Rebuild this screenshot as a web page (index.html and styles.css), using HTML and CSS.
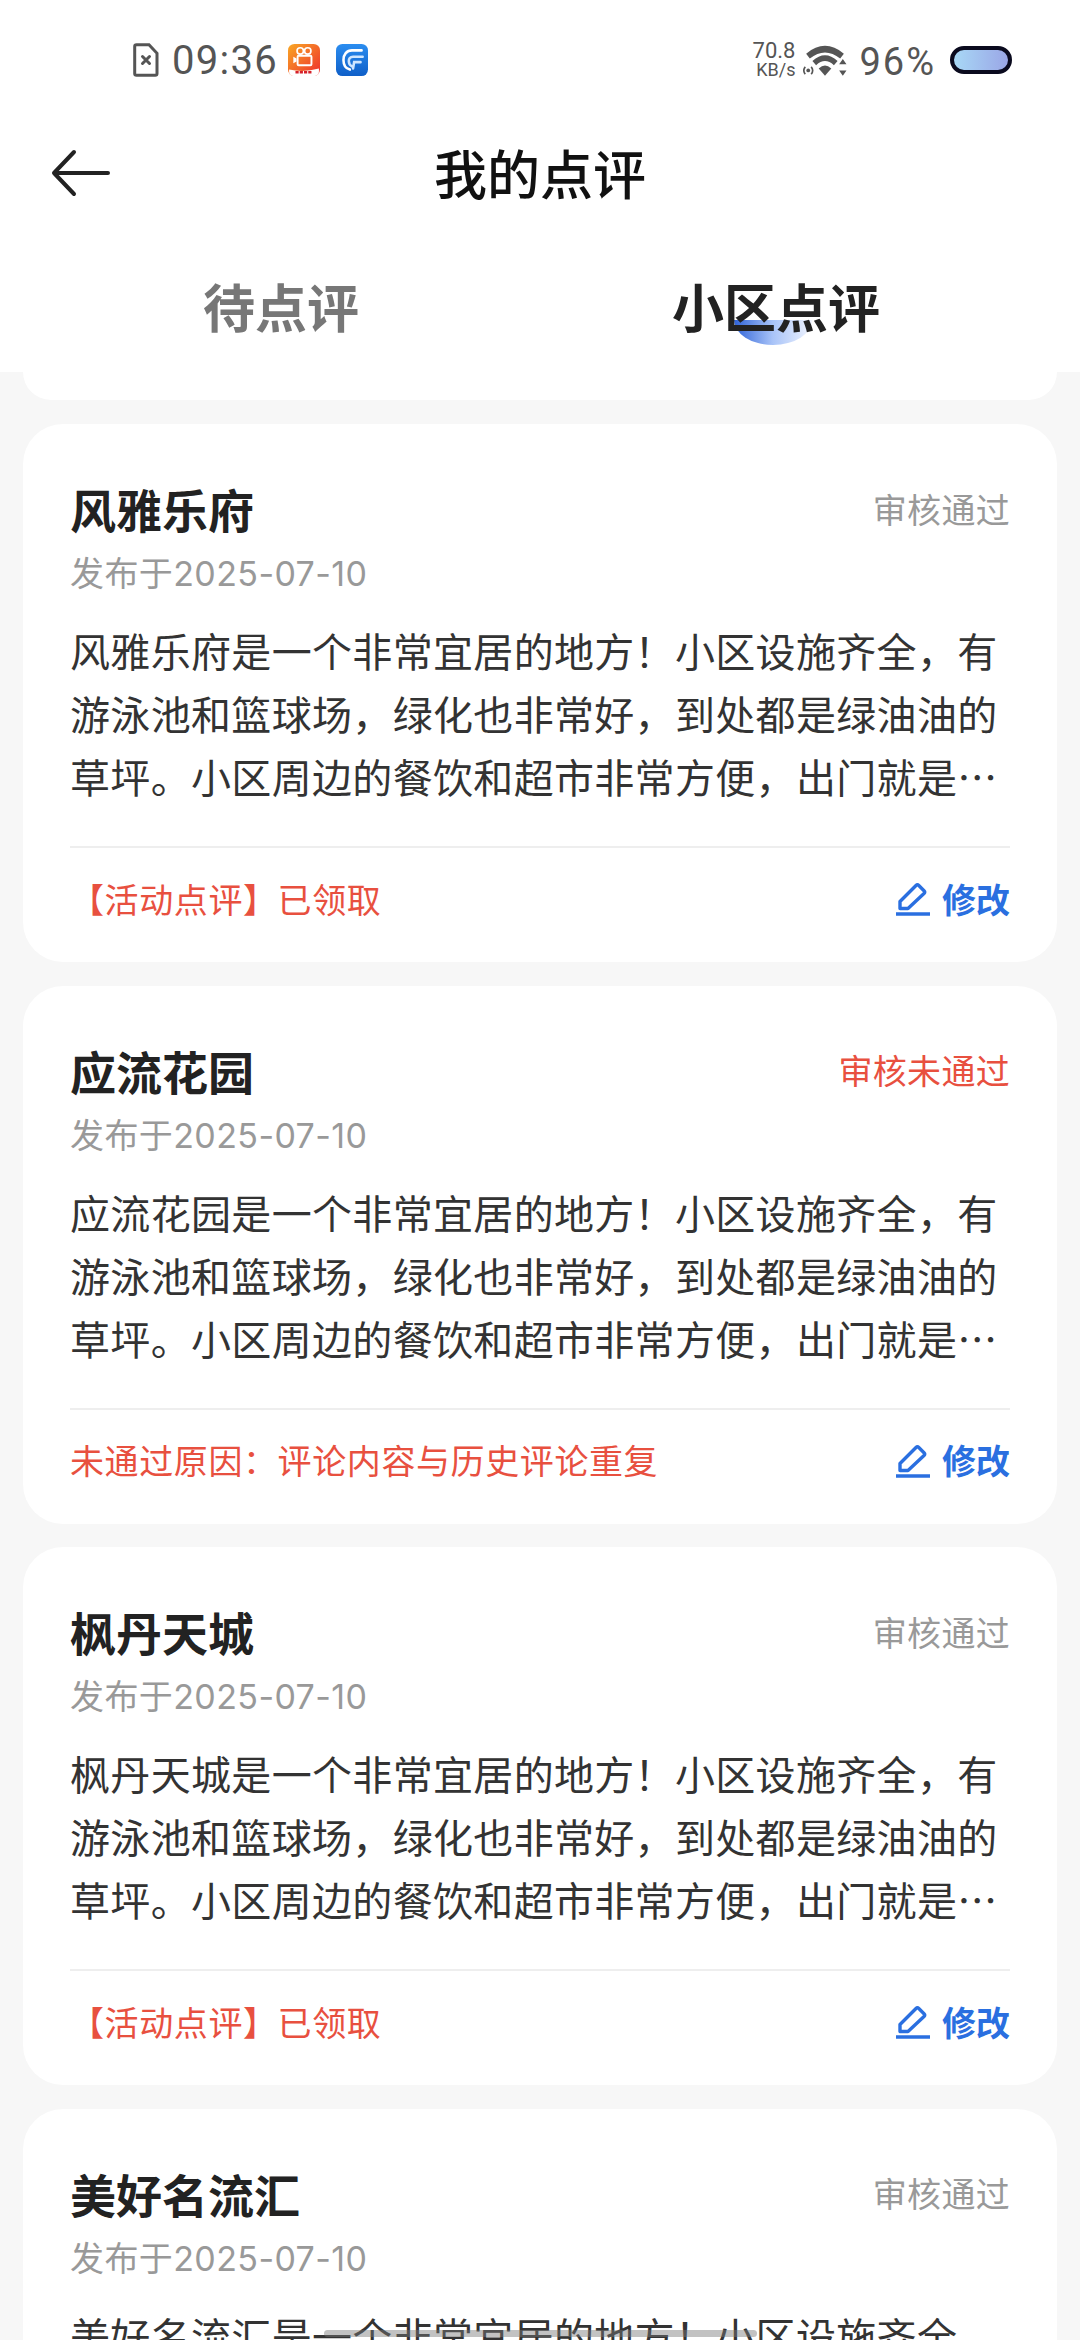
FILE: index.html
```html
<!DOCTYPE html>
<html lang="zh-CN">
<head>
  <meta charset="UTF-8">
  <meta name="viewport" content="width=device-width, initial-scale=1.0">
  <title>我的点评</title>
  <link rel="stylesheet" href="styles.css">
</head>
<body>
  <header class="top">
    <div class="status-bar">
      <div class="status-left">
        <svg class="sim" viewBox="0 0 26 34" width="26" height="34">
          <path d="M3.500 1.800h12.500l8 8.500v20.200a1.800 1.800 0 0 1-1.800 1.800H3.500a1.800 1.800 0 0 1-1.800-1.800V3.600a1.800 1.800 0 0 1 1.800-1.800z" fill="none" stroke="#555" stroke-width="3"/>
          <path d="M9.500 13.500l7 7M16.500 13.500l-7 7" stroke="#555" stroke-width="3" stroke-linecap="round"/>
        </svg>
        <span class="time">09:36</span>
        <svg class="app-icon" viewBox="0 0 30 30" width="32" height="32">
          <defs>
            <linearGradient id="appA" x1="0" y1="0" x2="1" y2="1">
              <stop offset="0" stop-color="#f9a825"/>
              <stop offset="1" stop-color="#ee2c2c"/>
            </linearGradient>
          </defs>
          <rect width="30" height="30" rx="6" fill="url(#appA)"/>
          <circle cx="11.500" cy="6.500" r="3" fill="none" stroke="#fff" stroke-width="1.600"/>
          <circle cx="18.500" cy="6.500" r="3" fill="none" stroke="#fff" stroke-width="1.600"/>
          <rect x="9" y="11" width="13" height="9" rx="1" fill="none" stroke="#fff" stroke-width="1.800"/>
          <path d="M8 13.500l-3-1.500v6l3-1.500z" fill="#fff"/>
          <path d="M1 24q14 3 28-1v3a4 4 0 0 1-4 4H5a4 4 0 0 1-4-4z" fill="#fff"/>
          <path d="M7 26.500h16" stroke="#d5202a" stroke-width="2.400" stroke-dasharray="3 1"/>
        </svg>
        <svg class="app-icon app-icon-b" viewBox="0 0 30 30" width="32" height="32">
          <defs>
            <linearGradient id="appB" x1="0" y1="0" x2="0" y2="1">
              <stop offset="0" stop-color="#2b8df0"/>
              <stop offset="1" stop-color="#0f5fc8"/>
            </linearGradient>
          </defs>
          <rect width="30" height="30" rx="6" fill="url(#appB)"/>
          <path d="M24 6H15c-5 0-8 4-8 9 0 5 2 8 6 9" fill="none" stroke="#fff" stroke-width="2.400" stroke-linecap="round"/>
          <path d="M25 12h-9c-3 0-4 2-4 4 0 2 1 4 3 5M23 17h-6l-1 6" fill="none" stroke="#cfe6ff" stroke-width="2.400" stroke-linecap="round"/>
        </svg>
      </div>
      <div class="status-right">
        <div class="speed"><span>70.8</span><span>KB/s</span></div>
        <svg class="wifi" viewBox="0 0 42 32" width="44" height="34">
          <path d="M3 10Q21-5 39 10l-3.500 4.500Q21 3 6.500 14.500z" fill="#555"/>
          <path d="M9 17Q21 6 33 17l-3.500 4Q21 13 12.500 21z" fill="#555"/>
          <path d="M15 24Q21 18.500 27 24L21 31z" fill="#555"/>
          <circle cx="5" cy="26" r="1.800" fill="#555"/>
          <path d="M2.200 22.500a5 5 0 0 0 0 7M7.800 22.500a5 5 0 0 1 0 7" fill="none" stroke="#555" stroke-width="1.600"/>
          <path d="M38 15l3.500 5h-7zM38 31l-3.500-5h7z" fill="#555"/>
        </svg>
        <span class="battery-text">96%</span>
        <div class="battery"></div>
      </div>
    </div>

    <nav class="nav">
      <svg class="back" viewBox="0 0 60 48" width="60" height="48">
        <path d="M3 24h54M23 3L3 24l20 21" fill="none" stroke="#222" stroke-width="4" stroke-linecap="round" stroke-linejoin="round"/>
      </svg>
      <h1>我的点评</h1>
    </nav>

    <div class="tabs">
      <div class="tab">待点评</div>
      <div class="tab tab-active"><span class="tab-mark"></span><span class="tab-label">小区点评</span></div>
    </div>
  </header>

  <main class="list">
    <div class="card-stub"></div>

    <section class="card">
      <div class="card-head">
        <h2>风雅乐府</h2>
        <span class="status">审核通过</span>
      </div>
      <div class="date">发布于2025-07-10</div>
      <p class="body">风雅乐府是一个非常宜居的地方！小区设施齐全，有游泳池和篮球场，绿化也非常好，到处都是绿油油的草坪。小区周边的餐饮和超市非常方便，出门就是…</p>
      <div class="card-foot">
        <span class="note">【活动点评】已领取</span>
        <a class="edit">
          <svg viewBox="0 0 36 36" width="36" height="36"><path d="M5 21.500L21 5.500a2 2 0 0 1 2.800 0l5.200 5.200a2 2 0 0 1 0 2.800L13 28.500H5z" fill="none" stroke="#2a6fe0" stroke-width="3.400" stroke-linejoin="round"/><path d="M1 34h34" stroke="#2a6fe0" stroke-width="3.600"/></svg>
          修改
        </a>
      </div>
    </section>

    <section class="card">
      <div class="card-head">
        <h2>应流花园</h2>
        <span class="status status-fail">审核未通过</span>
      </div>
      <div class="date">发布于2025-07-10</div>
      <p class="body">应流花园是一个非常宜居的地方！小区设施齐全，有游泳池和篮球场，绿化也非常好，到处都是绿油油的草坪。小区周边的餐饮和超市非常方便，出门就是…</p>
      <div class="card-foot">
        <span class="note note-reason">未通过原因：评论内容与历史评论重复</span>
        <a class="edit">
          <svg viewBox="0 0 36 36" width="36" height="36"><path d="M5 21.500L21 5.500a2 2 0 0 1 2.800 0l5.200 5.200a2 2 0 0 1 0 2.800L13 28.500H5z" fill="none" stroke="#2a6fe0" stroke-width="3.400" stroke-linejoin="round"/><path d="M1 34h34" stroke="#2a6fe0" stroke-width="3.600"/></svg>
          修改
        </a>
      </div>
    </section>

    <section class="card">
      <div class="card-head">
        <h2>枫丹天城</h2>
        <span class="status">审核通过</span>
      </div>
      <div class="date">发布于2025-07-10</div>
      <p class="body">枫丹天城是一个非常宜居的地方！小区设施齐全，有游泳池和篮球场，绿化也非常好，到处都是绿油油的草坪。小区周边的餐饮和超市非常方便，出门就是…</p>
      <div class="card-foot">
        <span class="note">【活动点评】已领取</span>
        <a class="edit">
          <svg viewBox="0 0 36 36" width="36" height="36"><path d="M5 21.500L21 5.500a2 2 0 0 1 2.800 0l5.200 5.200a2 2 0 0 1 0 2.800L13 28.500H5z" fill="none" stroke="#2a6fe0" stroke-width="3.400" stroke-linejoin="round"/><path d="M1 34h34" stroke="#2a6fe0" stroke-width="3.600"/></svg>
          修改
        </a>
      </div>
    </section>

    <section class="card">
      <div class="card-head">
        <h2>美好名流汇</h2>
        <span class="status">审核通过</span>
      </div>
      <div class="date">发布于2025-07-10</div>
      <p class="body">美好名流汇是一个非常宜居的地方！小区设施齐全</p>
    </section>
  </main>

  <div class="home-bar"></div>
</body>
</html>
```

FILE: styles.css
```css
* {
  box-sizing: border-box;
}
html, body {
  margin: 0;
  height: 2340px;
  overflow: hidden;
}
body {
  position: relative;
  font-family: "Noto Sans CJK SC", "Noto Sans", sans-serif;
  background: #f7f7f7;
  color: #222;
}
.top {
  height: 372px;
  background: #fff;
}
.status-bar {
  height: 120px;
  padding: 0 68px 0 133px;
  display: flex;
  justify-content: space-between;
  align-items: center;
  color: #555;
  font-family: Roboto, sans-serif;
}
.status-left, .status-right {
  display: flex;
  align-items: center;
}
.time {
  margin-left: 13px;
  font-size: 40px;
  letter-spacing: 1.300px;
}
.app-icon {
  margin-left: 10px;
}
.app-icon-b {
  margin-left: 16px;
}
.speed {
  display: flex;
  flex-direction: column;
  align-items: flex-end;
  font-size: 18px;
  line-height: 18px;
}
.speed span:first-child {
  font-size: 22px;
  line-height: 20px;
  align-self: flex-start;
}
.wifi {
  margin-left: 8px;
}
.battery-text {
  margin-left: 12px;
  font-size: 38px;
  letter-spacing: 2px;
  position: relative;
  top: 2px;
}
.battery {
  margin-left: 14px;
  width: 62px;
  height: 28px;
  border: 4px solid #0a0a1e;
  border-radius: 14px;
  background: linear-gradient(90deg, #a8d8f6, #9aa6e6);
}
.nav {
  height: 104px;
  position: relative;
  display: flex;
  justify-content: center;
  align-items: center;
}
.nav h1 {
  margin: 0;
  font-size: 53px;
  font-weight: 500;
  color: #111;
}
.back {
  position: absolute;
  left: 51px;
  top: 29px;
}
.tabs {
  height: 148px;
  padding: 14px 0 0 203px;
  display: flex;
  gap: 313px;
  align-items: center;
  font-size: 52px;
  font-weight: 700;
}
.tab {
  color: #777;
}
.tab-active {
  position: relative;
  color: #222;
}
.tab-label {
  position: relative;
}
.tab-mark {
  position: absolute;
  left: 62px;
  bottom: -2px;
  width: 78px;
  height: 25px;
  border-radius: 0 0 39px 39px / 0 0 25px 25px;
  background: linear-gradient(90deg, #2f63d8, #a9c4f8 50%, #f0f4fe);
}
.list {
  padding: 0 23px;
}
.card-stub {
  height: 28px;
  background: #fff;
  border-radius: 0 0 40px 40px;
}
.card {
  margin-top: 24px;
  background: #fff;
  border-radius: 40px;
  padding: 49px 47px 0;
  height: 538px;
}
.card + .card {
  margin-top: 23.500px;
}
.card-head {
  display: flex;
  justify-content: space-between;
  align-items: center;
  height: 70px;
}
.card-head h2 {
  margin: 0;
  font-size: 46px;
  font-weight: 700;
  color: #222;
}
.status {
  font-size: 34px;
  letter-spacing: .3px;
  color: #999;
}
.status-fail {
  color: #e8503f;
}
.date {
  margin-top: 6px;
  font-family: Inter, "Noto Sans CJK SC", sans-serif;
  font-size: 34px;
  letter-spacing: .4px;
  line-height: 50px;
  color: #999;
}
.body {
  margin: 20px 0 0;
  font-size: 40px;
  letter-spacing: .33px;
  line-height: 63px;
  height: 189px;
  color: #333;
}
.card-foot {
  margin-top: 38px;
  border-top: 2px solid #eee;
  height: 102px;
  display: flex;
  justify-content: space-between;
  align-items: center;
}
.note {
  font-size: 34px;
  letter-spacing: .6px;
  color: #e8503f;
}
.edit {
  display: flex;
  align-items: center;
  gap: 11px;
  font-size: 34px;
  font-weight: 700;
  color: #2a6fe0;
}
.home-bar {
  position: absolute;
  left: 324px;
  bottom: 3px;
  width: 433px;
  height: 7px;
  border-radius: 4px;
  background: rgba(120, 120, 120, 0.45);
}
```
